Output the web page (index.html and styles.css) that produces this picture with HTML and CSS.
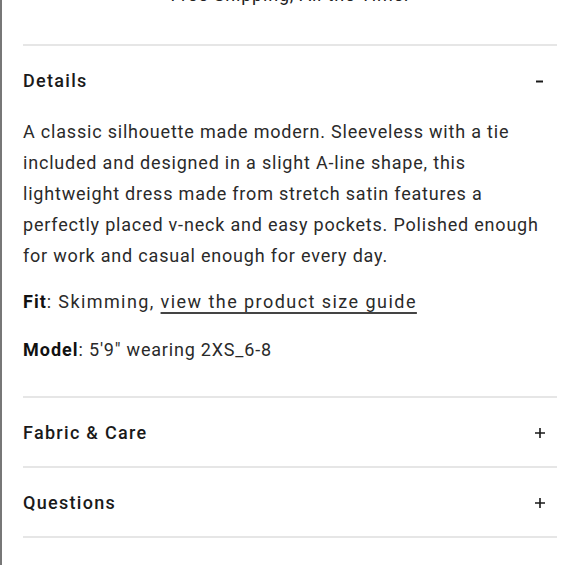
FILE: index.html
```html
<!DOCTYPE html>
<html>
<head>
<meta charset="utf-8">
<link rel="stylesheet" href="styles.css">
</head>
<body>
<div class="page">
  <div class="promo">Free Shipping, All the Time.</div>
  <div class="accordion">
    <section class="item open">
      <div class="head"><span class="title">Details</span><svg class="sign" width="10" height="10" viewBox="0 0 10 10"><path d="M1 5.5H8" stroke="#1a1a1a" stroke-width="2"/></svg></div>
      <div class="body">
        <p class="desc">A classic silhouette made modern. Sleeveless with a tie included and designed in a slight A-line shape, this lightweight dress made from stretch satin features a perfectly placed v-neck and easy pockets. Polished enough for work and casual enough for every day.</p>
        <p class="meta fit"><b>Fit</b>: Skimming, <a href="#">view the product size guide</a></p>
        <p class="meta"><b>Model</b>: 5'9" wearing 2XS_6-8</p>
      </div>
    </section>
    <section class="item">
      <div class="head"><span class="title">Fabric &amp; Care</span><svg class="sign" width="10" height="10" viewBox="0 0 10 10"><path d="M0 5H10M5 0V10" stroke="#1a1a1a" stroke-width="1.6"/></svg></div>
    </section>
    <section class="item">
      <div class="head"><span class="title">Questions</span><svg class="sign" width="10" height="10" viewBox="0 0 10 10"><path d="M0 5H10M5 0V10" stroke="#1a1a1a" stroke-width="1.6"/></svg></div>
    </section>
  </div>
</div>
</body>
</html>
```
FILE: styles.css
```css
html, body {
  margin: 0;
  padding: 0;
  background: #fff;
}
body {
  font-family: Roboto, "Liberation Sans", sans-serif;
  color: #1a1a1a;
  height: 580px;
  overflow: hidden;
}
.page {
  border-left: 2px solid #777;
  min-height: 580px;
  padding: 0 23px 0 21px;
}
.promo {
  text-align: center;
  font-size: 18px;
  letter-spacing: 0.8px;
  line-height: 20px;
  margin-top: -15px;
  height: 20px;
  color: #222;
}
.accordion {
  margin-top: 39px;
  border-top: 2px solid #e6e6e6;
}
.item {
  border-bottom: 2px solid #e6e6e6;
}
.head {
  height: 68px;
  display: flex;
  align-items: center;
  justify-content: space-between;
}
.title {
  font-size: 18px;
  letter-spacing: 1.3px;
  font-weight: 500;
  color: #1a1a1a;
}
.sign {
  display: block;
  margin-right: 12px;
  margin-top: 2px;
}
.body {
  padding-top: 2px;
  padding-bottom: 31px;
}
.desc {
  margin: 0;
  font-size: 18px;
  line-height: 31px;
  letter-spacing: 0.8px;
  color: #2a2a2a;
}
.meta {
  margin: 15px 0 0;
  font-size: 18px;
  line-height: 31px;
  letter-spacing: 0.8px;
  color: #2a2a2a;
}
.meta.fit {
  letter-spacing: 1.4px;
}
.meta.fit a {
  letter-spacing: 1.45px;
}
.meta + .meta {
  margin-top: 17px;
}
.meta b {
  font-weight: 700;
  color: #111;
  letter-spacing: 1px;
}
.meta a {
  color: #2a2a2a;
  text-decoration: underline;
  text-decoration-color: #444;
  text-underline-offset: 4px;
  text-decoration-thickness: 2px;
}
```
